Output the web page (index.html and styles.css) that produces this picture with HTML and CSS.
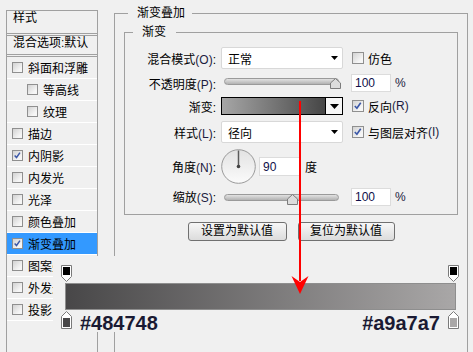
FILE: index.html
```html
<!DOCTYPE html>
<html lang="zh">
<head>
<meta charset="utf-8">
<title>渐变叠加</title>
<link rel="stylesheet" href="styles.css">
</head>
<body>
<div class="page">
  <aside class="sidebar">
    <div class="side-head">样式</div>
    <div class="side-blend">混合选项:默认</div>
    <ul class="fx-list">
      <li class="fx"><span class="cb"></span>斜面和浮雕</li>
      <li class="fx sub"><span class="cb"></span>等高线</li>
      <li class="fx sub"><span class="cb"></span>纹理</li>
      <li class="fx"><span class="cb"></span>描边</li>
      <li class="fx"><span class="cb"><svg viewBox="0 0 11 11"><path d="M2 5.5 L4.3 8 L8.5 2" /></svg></span>内阴影</li>
      <li class="fx"><span class="cb"></span>内发光</li>
      <li class="fx"><span class="cb"></span>光泽</li>
      <li class="fx"><span class="cb"></span>颜色叠加</li>
      <li class="fx active"><span class="cb"><svg viewBox="0 0 11 11"><path d="M2 5.5 L4.3 8 L8.5 2" /></svg></span>渐变叠加</li>
      <li class="fx"><span class="cb"></span>图案叠加</li>
      <li class="fx"><span class="cb"></span>外发光</li>
      <li class="fx"><span class="cb"></span>投影</li>
    </ul>
  </aside>

  <main class="main">
    <fieldset class="group outer">
      <legend>渐变叠加</legend>
      <fieldset class="group inner">
        <legend>渐变</legend>

        <div class="row r-sel">
          <span class="lbl">混合模式<span class="key">(O)</span>:</span>
          <div class="select"><span>正常</span><svg class="caret" viewBox="0 0 7 4"><polygon points="0,0 7,0 3.5,4"/></svg></div>
          <label class="check"><span class="cb"></span>仿色</label>
        </div>

        <div class="row r-slide">
          <span class="lbl">不透明度<span class="key">(P)</span>:</span>
          <div class="slider">
            <div class="track"></div>
            <svg class="thumb" style="left:109px" viewBox="0 0 11 11"><path d="M5.5 0.5 L10.5 5 V10.5 H0.5 V5 Z"/></svg>
          </div>
          <input class="field" type="text" value="100">
          <span class="unit">%</span>
        </div>

        <div class="row r-grad">
          <span class="lbl">渐变:</span>
          <div class="grad-pick">
            <div class="grad-fill"></div>
            <div class="grad-btn"><svg viewBox="0 0 9 5"><polygon points="0,0 9,0 4.5,5"/></svg></div>
          </div>
          <label class="check"><span class="cb"><svg viewBox="0 0 11 11"><path d="M2 5.5 L4.3 8 L8.5 2" /></svg></span>反向<span class="key">(R)</span></label>
        </div>

        <div class="row r-sel r-style">
          <span class="lbl">样式<span class="key">(L)</span>:</span>
          <div class="select"><span>径向</span><svg class="caret" viewBox="0 0 7 4"><polygon points="0,0 7,0 3.5,4"/></svg></div>
          <label class="check"><span class="cb"><svg viewBox="0 0 11 11"><path d="M2 5.5 L4.3 8 L8.5 2" /></svg></span>与图层对齐<span class="key">(I)</span></label>
        </div>

        <div class="row r-angle">
          <span class="lbl">角度<span class="key">(N)</span>:</span>
          <svg class="dial" viewBox="0 0 35 35">
            <defs>
              <linearGradient id="dialg" x1="0" y1="0" x2="0" y2="1">
                <stop offset="0" stop-color="#e2e2e2"/>
                <stop offset="1" stop-color="#fbfbfb"/>
              </linearGradient>
            </defs>
            <circle cx="17.5" cy="17.5" r="16.8" fill="url(#dialg)" stroke="#9a9a9a" stroke-width="1"/>
            <line x1="17.5" y1="17.5" x2="17.5" y2="1.5" stroke="#5a5a5a" stroke-width="1.5"/>
            <circle cx="17.5" cy="17.5" r="1.8" fill="#444"/>
          </svg>
          <input class="field angle" type="text" value="90">
          <span class="unit deg">度</span>
        </div>

        <div class="row r-slide r-scale">
          <span class="lbl">缩放<span class="key">(S)</span>:</span>
          <div class="slider">
            <div class="track"></div>
            <svg class="thumb" style="left:66px" viewBox="0 0 11 11"><path d="M5.5 0.5 L10.5 5 V10.5 H0.5 V5 Z"/></svg>
          </div>
          <input class="field" type="text" value="100">
          <span class="unit">%</span>
        </div>
      </fieldset>

      <div class="buttons">
        <button class="btn b1" type="button">设置为默认值</button>
        <button class="btn b2" type="button">复位为默认值</button>
      </div>
    </fieldset>
  </main>
</div>

<div class="swatch-overlay">
  <div class="stops">
    <svg class="stop" viewBox="0 0 11 18"><path class="stop-shape" d="M0.5 0.5 H10.5 V11.5 L5.5 16.5 L0.5 11.5 Z"/><rect x="2" y="2" width="7" height="8" fill="#000"/></svg>
    <svg class="stop" viewBox="0 0 11 18"><path class="stop-shape" d="M0.5 0.5 H10.5 V11.5 L5.5 16.5 L0.5 11.5 Z"/><rect x="2" y="2" width="7" height="8" fill="#000"/></svg>
  </div>
  <div class="bar"></div>
  <div class="stops bottom">
    <svg class="stop" viewBox="0 0 11 18"><path class="stop-shape" d="M5.5 0.5 L10.5 5.5 V17.5 H0.5 V5.5 Z"/><rect x="2" y="7" width="7" height="9" fill="#484748"/></svg>
    <span class="hex left">#484748</span>
    <span class="hex right">#a9a7a7</span>
    <svg class="stop" viewBox="0 0 11 18"><path class="stop-shape" d="M5.5 0.5 L10.5 5.5 V17.5 H0.5 V5.5 Z"/><rect x="2" y="7" width="7" height="9" fill="#a9a7a7"/></svg>
  </div>
</div>

<svg class="red-arrow" viewBox="0 0 473 352" width="473" height="352">
  <rect x="299" y="101" width="2" height="180" fill="#ff0000"/>
  <polygon points="291.5,276 300,282 308.5,276 300,294" fill="#ff0000"/>
</svg>
</body>
</html>
```

FILE: styles.css
```css
* { box-sizing: border-box; }

html, body {
  margin: 0;
  padding: 0;
}

body {
  width: 473px;
  height: 352px;
  overflow: hidden;
  position: relative;
  background: #f0f0f0;
  font-family: "Liberation Sans", "Noto Sans CJK SC", sans-serif;
  font-size: 12px;
  color: #000;
}

.page {
  display: flex;
  align-items: flex-start;
  padding-left: 6px;
  height: 352px;
}

/* ---------- left style list ---------- */
.sidebar {
  flex: none;
  width: 92px;
  height: 342px;
  margin-top: 10px;
  border: 1px solid #a0a0a0;
  border-bottom: none;
}

.side-head {
  height: 25px;
  line-height: 14px;
  padding-left: 6px;
  border-bottom: 3px double #a0a0a0;
}

.side-blend {
  height: 21px;
  line-height: 14px;
  padding-left: 6px;
  border-bottom: 3px double #a0a0a0;
}

.fx-list {
  list-style: none;
  margin: 0;
  padding: 0;
}

.fx {
  height: 22px;
  display: flex;
  align-items: center;
  padding-left: 5px;
  border-bottom: 1px solid #ffffff;
  white-space: nowrap;
}

.fx.sub { padding-left: 20px; }

.fx.active { background: #3399ff; }

.cb {
  flex: none;
  display: flex;
  width: 11px;
  height: 11px;
  margin-right: 5px;
  border: 1px solid #8f8f8f;
  background: linear-gradient(135deg, #d2d2d2, #f6f6f6 75%);
}

.cb svg {
  width: 100%;
  height: 100%;
  fill: none;
  stroke: #3c58a8;
  stroke-width: 1.8;
}

/* ---------- main dialog ---------- */
.main {
  flex: none;
  width: 354px;
  margin-left: 16px;
  margin-top: 5px;
}

.group {
  margin: 0;
  min-width: 0;
  border: 1px solid #a0a0a0;
}

.group > legend {
  font-size: 12px;
  line-height: 16px;
  padding: 0 8px 0 9px;
}

.outer {
  height: 347px;
  padding: 3px 9px 0 9px;
  border-bottom: none;
}

.outer > legend { margin-left: 4px; padding-right: 7px; }

.inner {
  padding: 7px 0 8px 0;
}

.inner > legend { margin-left: 8px; padding-right: 10px; }

.row {
  display: flex;
  align-items: center;
  white-space: nowrap;
}

.lbl {
  flex: none;
  width: 91px;
  margin-right: 5px;
  text-align: right;
}

.key { color: #1c1c40; }

.r-sel { height: 22px; }
.r-style { margin-top: 6px; }
.r-slide { height: 18px; margin-top: 5px; }
.r-grad { height: 18px; margin-top: 5px; }
.r-angle { height: 35px; margin-top: 6px; }
.r-scale { height: 19px; margin-top: 3px; }

.select {
  flex: none;
  width: 122px;
  height: 22px;
  display: flex;
  align-items: center;
  justify-content: space-between;
  padding: 0 4px 0 6px;
  background: #ffffff;
  border: 1px solid #d8d8d8;
  border-radius: 2px;
}

.caret {
  width: 7px;
  height: 4px;
  fill: #000;
}

.check {
  display: flex;
  align-items: center;
  margin-left: 9px;
}

.check .cb {
  width: 12px;
  height: 12px;
  margin-right: 4px;
}

.slider {
  flex: none;
  position: relative;
  width: 122px;
  height: 18px;
}

.track {
  margin: 4px 0 0 3px;
  width: 115px;
  height: 7px;
  border-radius: 4px;
  border: 1px solid #9a9a9a;
  background: linear-gradient(#e2e2e2, #b2b2b2);
}

.r-scale .track { margin-top: 6px; }

.thumb {
  position: absolute;
  top: 4px;
  width: 11px;
  height: 11px;
  fill: #dcdcdc;
  stroke: #7c7c7c;
  stroke-width: 1;
}

.r-scale .thumb { top: 6px; }

.field {
  flex: none;
  width: 40px;
  height: 18px;
  margin: 0 0 0 8px;
  padding: 0 3px;
  border: 1px solid #dcdcdc;
  background: #ffffff;
  font-family: "Liberation Sans", sans-serif;
  font-size: 12px;
  color: #10104a;
  outline: none;
}

.unit {
  margin-left: 4px;
  color: #1c1c40;
}

.grad-pick {
  flex: none;
  display: flex;
  width: 122px;
  height: 18px;
  border: 1px solid #000;
  background: #ffffff;
}

.grad-fill {
  flex: 1;
  background: linear-gradient(to right, #a6a6a6, #464646);
}

.grad-btn {
  flex: none;
  width: 17px;
  display: flex;
  align-items: center;
  justify-content: center;
  border-left: 1px solid #000;
  background: #f6f6f6;
}

.grad-btn svg {
  width: 9px;
  height: 5px;
  fill: #000;
}

.dial {
  flex: none;
  width: 35px;
  height: 35px;
}

.field.angle {
  width: 42px;
  height: 19px;
  margin-left: 3px;
}

.unit.deg { margin-left: 4px; color: #000; }

.buttons {
  display: flex;
  justify-content: center;
  gap: 11px;
  margin-top: 7px;
}

.btn {
  height: 19px;
  padding: 0;
  border: 1px solid #707070;
  border-radius: 3px;
  background: linear-gradient(#f7f7f7, #dcdcdc);
  font-family: "Liberation Sans", "Noto Sans CJK SC", sans-serif;
  font-size: 12px;
  line-height: 15px;
  color: #000;
}

.b1 { width: 99px; }
.b2 { width: 97px; }

/* ---------- gradient swatch overlay ---------- */
.swatch-overlay {
  position: absolute;
  left: 53px;
  top: 256px;
  width: 410px;
  height: 76px;
  padding: 9px 0 0 8px;
  background: #f0f0f0;
}

.stops {
  display: flex;
  justify-content: space-between;
  width: 398px;
  height: 18px;
}

.stop {
  display: block;
  flex: none;
  width: 11px;
  height: 18px;
}

.stop-shape {
  fill: #ffffff;
  stroke: #7a7a7a;
  stroke-width: 1;
}

.bar {
  margin-left: 4px;
  width: 391px;
  height: 27px;
  border: 1px solid #8e8e8e;
  background: linear-gradient(to right, #484748, #a9a7a7);
}

.stops.bottom {
  margin-top: 1px;
  justify-content: flex-start;
  align-items: flex-start;
  height: 22px;
}

.hex {
  margin-top: 2px;
  font-family: "Liberation Sans", sans-serif;
  font-weight: bold;
  font-size: 20px;
  line-height: 20px;
  color: #1a1a33;
}

.hex.left { margin-left: 8px; margin-right: auto; }
.hex.right { margin-right: 8px; }

.red-arrow {
  position: absolute;
  left: 0;
  top: 0;
  pointer-events: none;
}
```
